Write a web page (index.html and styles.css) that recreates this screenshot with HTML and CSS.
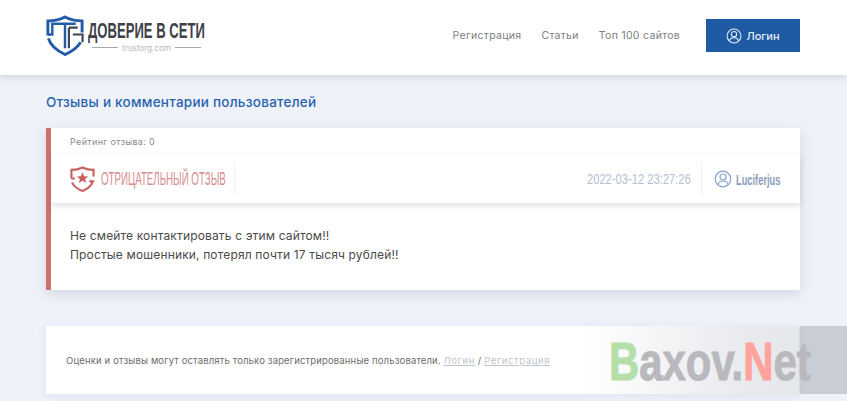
FILE: index.html
```html
<!DOCTYPE html>
<html lang="ru">
<head>
<meta charset="utf-8">
<title>Доверие в сети</title>
<link rel="stylesheet" href="styles.css">
</head>
<body>
<header class="header">
  <a class="logo">
    <svg class="logo-icon" viewBox="0 0 38 42" fill="none" stroke="#225ca8" stroke-width="3">
      <path d="M1.500 21 V6 Q12 6 19 2 Q26 6 36.500 6 V18 M2 24 Q5 34 19 40.500 Q30 36 35 28"/>
      <path d="M1.500 20 H6 V9 H30 M19 9 V34" stroke-width="2.500"/>
      <path d="M23 13 H32 M23 13 V34 M27 20 H37 V28" stroke="#3d4652" stroke-width="2.200"/>
    </svg>
    <span class="logo-text">
      <span class="logo-title"><span>ДОВЕРИЕ В СЕТИ</span></span>
      <span class="logo-sub"><i></i>trustorg.com<i></i></span>
    </span>
  </a>
  <nav class="nav">
    <a>Регистрация</a>
    <a>Статьи</a>
    <a>Топ 100 сайтов</a>
  </nav>
  <a class="login">
    <svg class="user" viewBox="0 0 18 18" fill="none" stroke="currentColor" stroke-width="1.200"><circle cx="9" cy="9" r="7.800"/><circle cx="9" cy="7" r="3"/><path d="M3.800 14.500 Q5 11 9 11 T14.200 14.500"/></svg>
    Логин
  </a>
</header>
<main class="main">
  <h1 class="heading">Отзывы и комментарии пользователей</h1>
  <article class="review">
    <div class="rating">Рейтинг отзыва: 0</div>
    <div class="meta">
      <div class="verdict">
        <svg class="shield" viewBox="0 0 26 28" fill="none" stroke="#c9625f" stroke-width="2.200">
          <path d="M1.500 13 V4 Q8 4 13 1.500 Q18 4 24.500 4 V11 M1.500 13 H5 M2 17 Q5 23 13 26 Q21 23 24 16 H20"/>
          <path d="M13 6.500 L14.700 10.500 L19 10.800 L15.700 13.500 L16.800 17.700 L13 15.400 L9.200 17.700 L10.300 13.500 L7 10.800 L11.300 10.500 Z" fill="#c9625f" stroke="none"/>
        </svg>
        <span class="verdict-text"><span>ОТРИЦАТЕЛЬНЫЙ ОТЗЫВ</span></span>
      </div>
      <div class="date"><span>2022-03-12 23:27:26</span></div>
      <div class="author">
        <svg class="user user-lg" viewBox="0 0 18 18" fill="none" stroke="currentColor" stroke-width="1.200"><circle cx="9" cy="9" r="7.800"/><circle cx="9" cy="7" r="3"/><path d="M3.800 14.500 Q5 11 9 11 T14.200 14.500"/></svg>
        <span class="author-name"><span>Luciferjus</span></span>
      </div>
    </div>
    <div class="body">
      <p>Не смейте контактировать с этим сайтом!!</p>
      <p>Простые мошенники, потерял почти 17 тысяч рублей!!</p>
    </div>
  </article>
  <section class="notice">
    Оценки и отзывы могут оставлять только зарегистрированные пользователи. <a>Логин</a> / <a>Регистрация</a>
  </section>
</main>
<div class="watermark"><span class="wm-text"><span class="g">B</span>axov.<span class="r">N</span>et</span></div>
</body>
</html>
```
FILE: styles.css
```css
* { box-sizing: border-box; }
html, body { height: 100%; }
body {
  margin: 0;
  width: 847px;
  height: 401px;
  overflow: hidden;
  position: relative;
  background: #eff2f9;
  font-family: Inter, "Noto Sans", sans-serif;
  color: #4c4c4c;
}
.header {
  height: 75px;
  background: #fff;
  box-shadow: 0 1px 8px rgba(90, 100, 130, .28);
  display: flex;
  align-items: center;
  padding: 0 47px 4px 46px;
}
.logo { display: flex; align-items: center; gap: 4px; margin-right: auto; }
.logo-icon { width: 38px; height: 41px; }
.logo-text { display: flex; flex-direction: column; align-items: center; width: 117px; }
.logo-title {
  display: block;
  width: 117px;
  height: 24px;
  font-family: "Liberation Sans", sans-serif;
  font-weight: 700;
  font-size: 22px;
  line-height: 24px;
  color: #3d4249;
  white-space: nowrap;
}
.logo-title span, .verdict-text span, .date span, .author-name span, .wm-text {
  display: inline-block;
  transform-origin: left center;
  white-space: nowrap;
}
.logo-title span { transform: scaleX(.595); }
.logo-sub { display: flex; align-items: center; gap: 4px; font-size: 8px; line-height: 10px; color: #b5b8bd; }
.logo-sub i { width: 26px; height: 1px; background: #a5a8ad; }
.nav { display: flex; gap: 20px; font-size: 10.500px; letter-spacing: .3px; color: #7b7e83; }
.login {
  margin-left: 26px;
  width: 94px;
  height: 33px;
  background: #1f5aa5;
  color: #e6edf6;
  font-size: 11px;
  font-weight: 500;
  display: flex;
  align-items: center;
  justify-content: center;
  gap: 4px;
}
.user { width: 16px; height: 16px; }
.main { padding: 18px 47px 0 46px; }
.heading {
  margin: 0 0 17px;
  font-size: 13.500px;
  line-height: 18px;
  font-weight: 500;
  letter-spacing: .25px;
  color: #2a63ad;
}
.review {
  height: 162px;
  background: #fff;
  border-left: 5px solid #d0706c;
  box-shadow: 0 4px 12px rgba(90, 100, 130, .18);
}
.rating { height: 27px; padding: 8px 0 0 19px; font-size: 9px; letter-spacing: .35px; line-height: 12px; color: #8a8c90; }
.meta {
  height: 48px;
  display: flex;
  align-items: center;
  background: #fff;
  box-shadow: 0 3px 7px rgba(90, 100, 130, .2);
  padding-left: 19px;
}
.verdict {
  display: flex;
  align-items: center;
  gap: 6px;
  height: 32px;
  padding-right: 8px;
  border-right: 1px solid #f6f1f2;
  margin-right: auto;
}
.verdict-text {
  width: 125px;
  font-family: "Liberation Sans", sans-serif;
  font-size: 18px;
  color: #d58d8d;
}
.verdict-text span { transform: scaleX(.54); }
.shield { width: 25px; height: 27px; }
.date {
  width: 115px;
  font-family: "Liberation Sans", sans-serif;
  font-size: 15.500px;
  color: #b3bfd4;
  height: 32px;
  line-height: 32px;
  border-right: 1px solid #eef0f5;
}
.date span { transform: scaleX(.72); }
.author {
  display: flex;
  align-items: center;
  gap: 4px;
  padding-left: 12px;
  width: 98px;
}
.author-name {
  width: 44px;
  font-family: "Liberation Sans", sans-serif;
  font-size: 15px;
  font-weight: 700;
  color: #8b9cbc;
}
.author-name span { transform: scaleX(.62); }
.user-lg { width: 18px; height: 18px; color: #88a3d0; flex: none; }
.body { padding: 23px 0 0 19px; font-size: 12px; letter-spacing: .15px; line-height: 19px; color: #4a4a4a; }
.body p { margin: 0; }
.notice {
  margin-top: 36px;
  height: 68px;
  background: #fff;
  box-shadow: 0 2px 10px rgba(90, 100, 130, .1);
  padding: 28px 0 0 20px;
  font-size: 9.500px;
  letter-spacing: .15px;
  line-height: 14px;
  color: #6c6c6c;
}
.notice a { color: #c0c4cc; text-decoration: underline; letter-spacing: .6px; }
.watermark {
  position: absolute;
  left: 580px;
  top: 326px;
  width: 267px;
  height: 68px;
  padding: 9px 0 0 29px;
  background: linear-gradient(90deg, rgba(190, 196, 205, 0) 0%, rgba(190, 196, 205, .35) 60%, rgba(190, 196, 205, .4) 82%, rgba(190, 196, 205, .8) 82.400%);
  font-family: "Liberation Sans", sans-serif;
  font-weight: 700;
  font-size: 53px;
  line-height: 53px;
  color: #b9b9bd;
}
.wm-text { transform: scaleX(.79); -webkit-text-stroke: 1px currentColor; }
.watermark .g { color: #b5dfa9; }
.watermark .r { color: #ffa39c; }
```
